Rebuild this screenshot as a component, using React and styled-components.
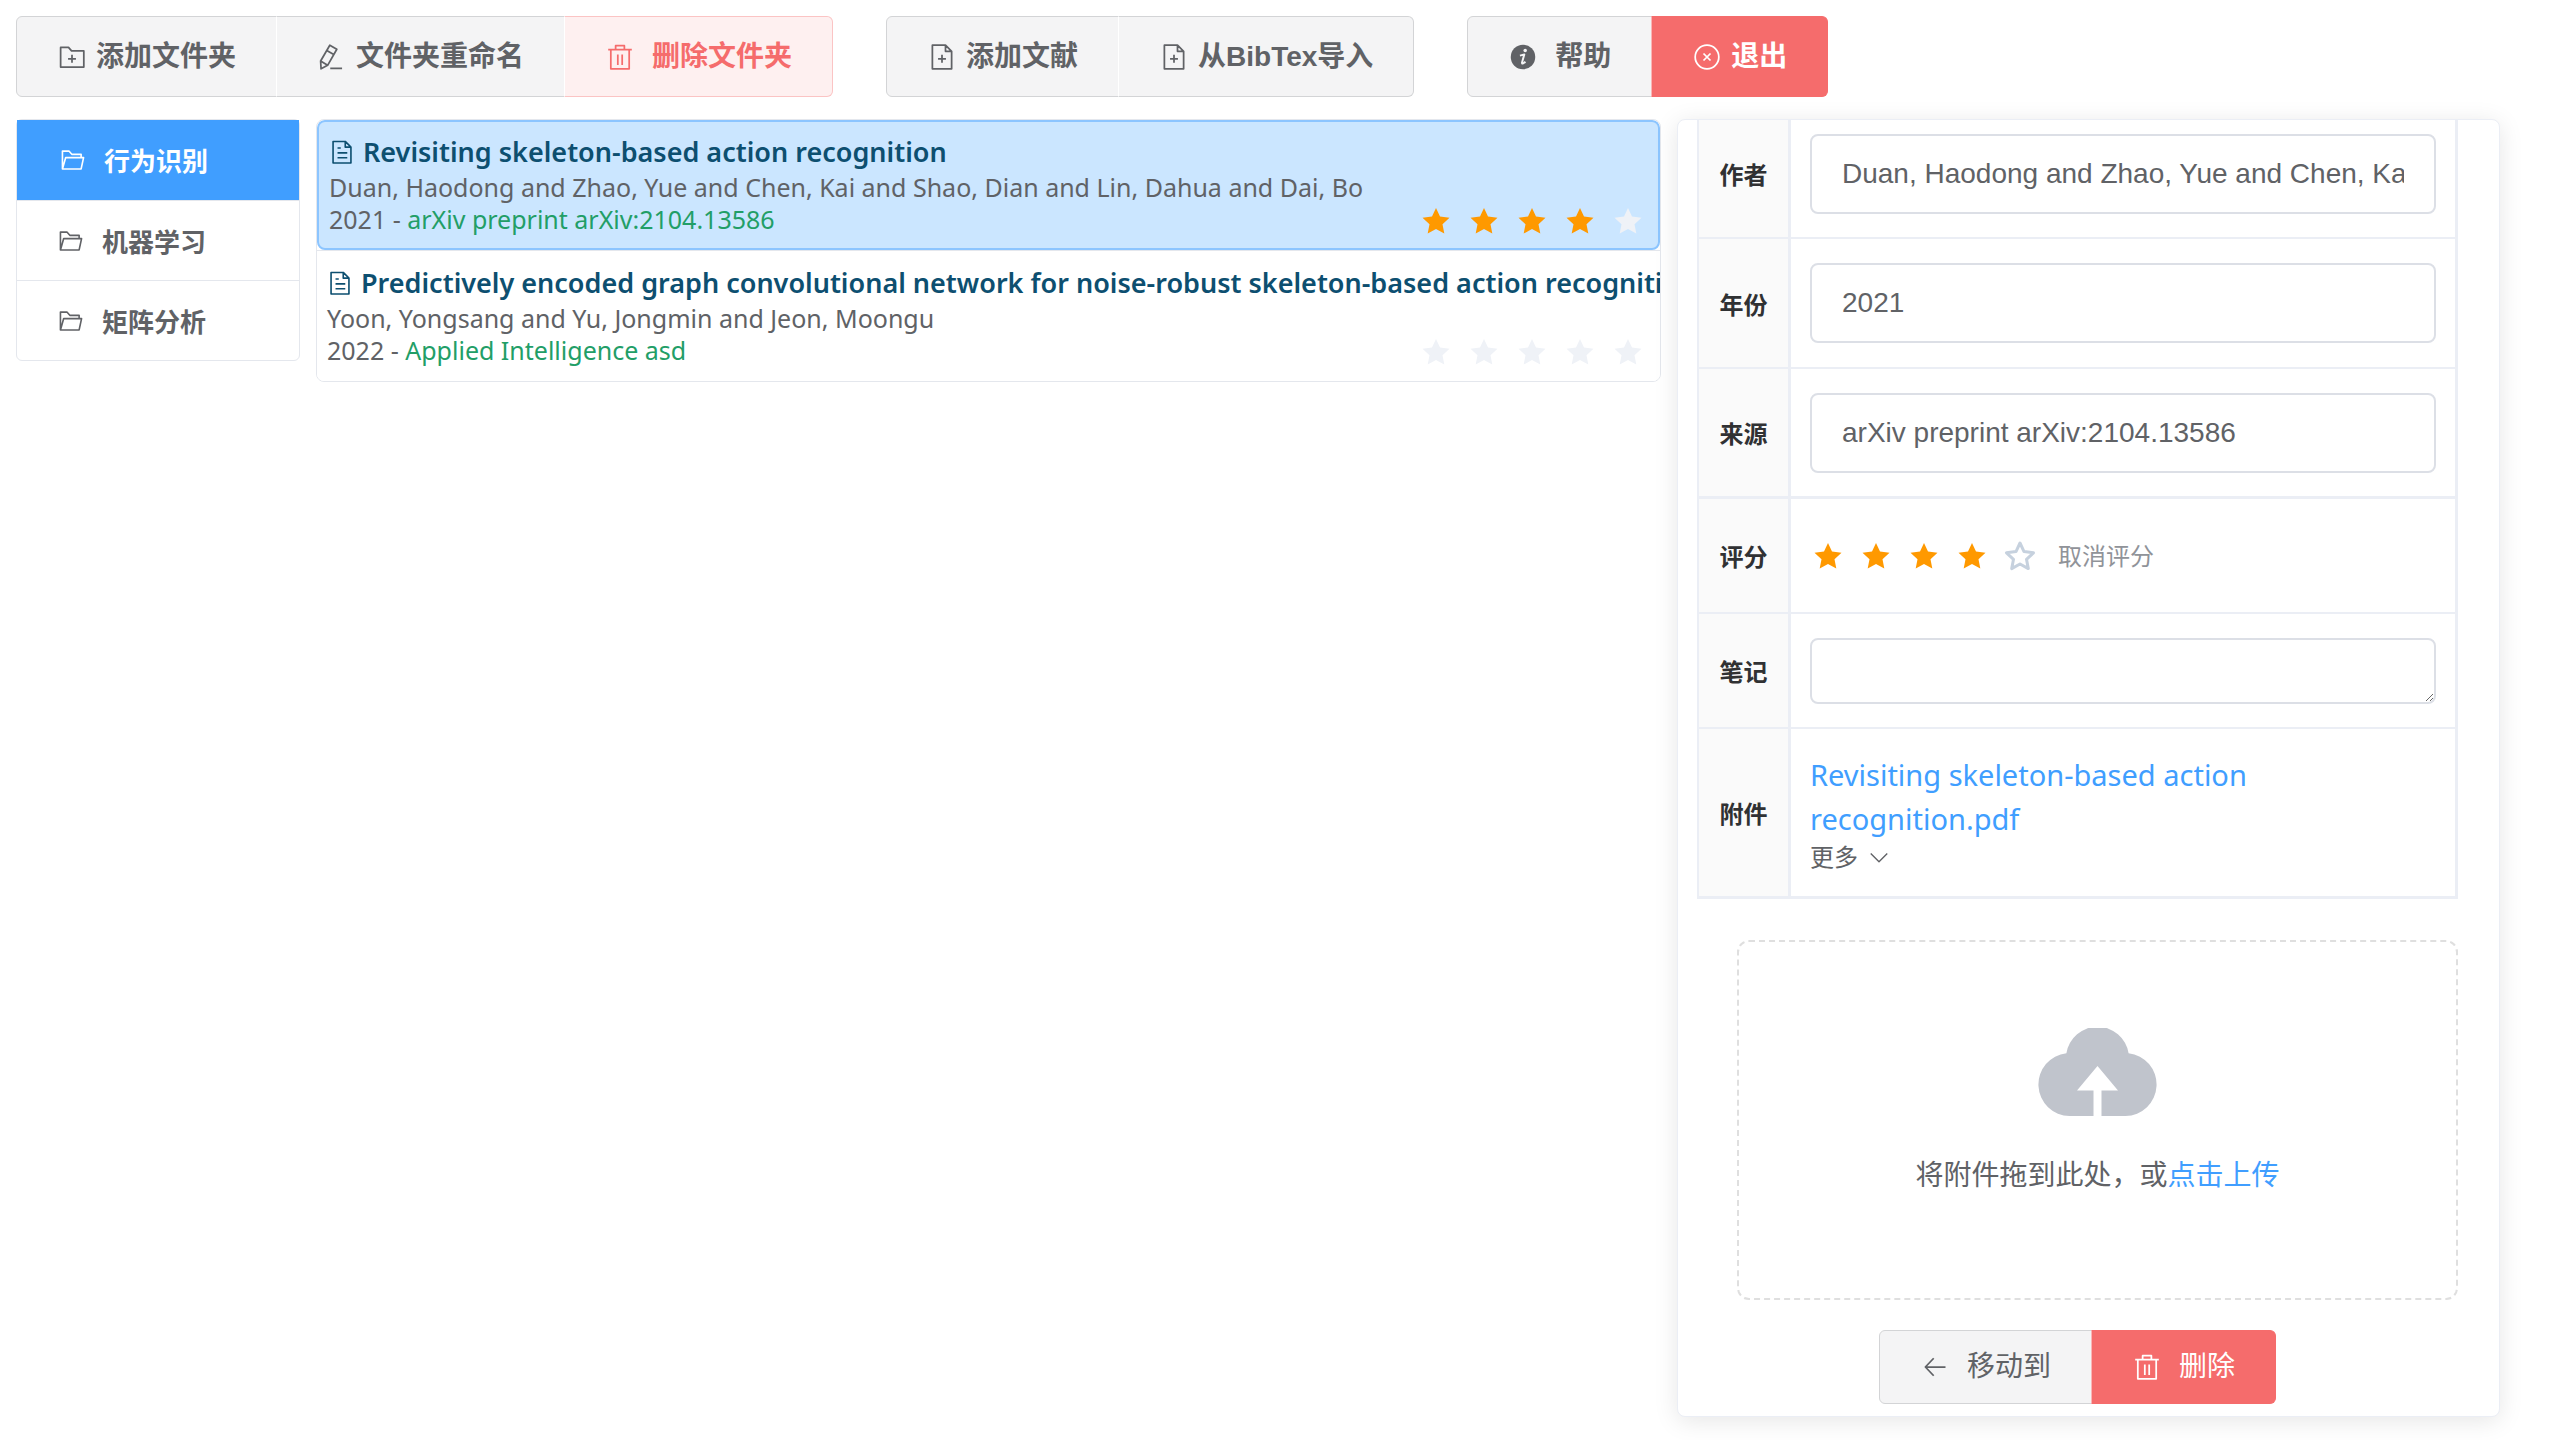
import React from "react";
import styled, { createGlobalStyle, css } from "styled-components";

const GlobalStyle = createGlobalStyle`
  *, *::before, *::after { box-sizing: border-box; }
  body { margin: 0; background: #fff; color: #606266; font-family: "Noto Sans", "Noto Sans CJK SC", sans-serif; font-size: 24px; }
  button, input, textarea { font-family: inherit; margin: 0; }
  svg { flex-shrink: 0; }
`;

const Page = styled.div`
  display: flex;
  flex-direction: column;
  gap: 22px;
  height: 100vh;
  padding: 16px 60px 23px 16px;
`;

const Toolbar = styled.header`
  display: flex;
  gap: 53px;
`;

const ButtonGroup = styled.div`
  display: flex;
  & > button:first-child { border-radius: 6px 0 0 6px; }
  & > button:last-child { border-radius: 0 6px 6px 0; }
  & > button + button { margin-left: -1px; }
`;

const tones = {
  info: css`
    background: #f4f4f5;
    border-color: #d3d4d6;
    color: #606266;
    &:not(:first-child) { border-left-color: #fff; }
  `,
  dangerPlain: css`
    background: #fef0f0;
    border-color: #fbc4c4;
    border-left-color: #fff;
    color: #f56c6c;
  `,
  danger: css`
    background: #f56c6c;
    border-color: #f56c6c;
    border-left-color: #fab6b6;
    color: #fff;
  `,
};

const Button = styled.button`
  display: flex;
  align-items: center;
  justify-content: center;
  gap: ${(p) => (p.$spaced ? 18 : 10)}px;
  height: ${(p) => (p.$compact ? 74 : 81)}px;
  padding: 0 40px 0 41px;
  border: 1px solid;
  font-family: "Liberation Sans", Arial, "Noto Sans CJK SC", sans-serif;
  font-size: 28px;
  line-height: 36px;
  font-weight: ${(p) => (p.$compact ? 400 : 700)};
  white-space: nowrap;
  cursor: pointer;
  ${(p) => tones[p.$tone || "info"]}
`;

const Main = styled.main`
  display: grid;
  grid-template-columns: 284px minmax(0, 1345fr) minmax(0, 823fr);
  column-gap: 16px;
  align-items: start;
  flex: 1;
  min-height: 0;
`;

const Folders = styled.nav`
  display: flex;
  flex-direction: column;
  border: 1px solid #e4e7ed;
  border-radius: 6px;
`;

const Folder = styled.button`
  display: flex;
  align-items: center;
  gap: 18px;
  height: 80px;
  padding: 0 41px;
  border: 0 solid #e4e7ed;
  border-top-width: 1px;
  background: transparent;
  color: #606266;
  font-size: 26px;
  font-weight: 700;
  cursor: pointer;
  &:first-child { border-top: 0; }
  ${(p) =>
    p.$active &&
    css`
      padding: 0 43px;
      background: #409eff;
      color: #fff;
    `}
`;

const Papers = styled.section`
  border: 1px solid #e4e7ed;
  border-radius: 8px;
  overflow: hidden;
`;

const Paper = styled.article`
  display: flex;
  flex-direction: column;
  height: 131px;
  padding: 13px 14px 0 10px;
  background: #fff;
  border-top: 1px solid #e4e7ed;
  ${(p) =>
    p.$active &&
    css`
      height: 130px;
      padding: 11px 12px 0 10px;
      border: 2px solid #8cc5ff;
      border-radius: 8px;
      background: #cbe6ff;
    `}
`;

const PaperTitle = styled.h2`
  display: flex;
  align-items: center;
  gap: 8px;
  margin: 0;
  color: #0d4f70;
  font-size: 27px;
  line-height: 38px;
  font-weight: 600;
  white-space: nowrap;
`;

const Line = styled.div`
  display: flex;
  justify-content: space-between;
  font-size: 25px;
  line-height: 32px;
  white-space: nowrap;
`;

const Source = styled.span`
  color: #229e67;
`;

const Stars = styled.span`
  display: flex;
  align-items: center;
  gap: 12px;
`;

const Card = styled.aside`
  height: 100%;
  padding: 0 41px 0 19px;
  border: 1px solid #ebeef5;
  border-radius: 8px;
  background: #fff;
  box-shadow: 0 4px 24px rgba(0, 0, 0, 0.1);
  overflow: hidden;
`;

const Details = styled.table`
  width: 100%;
  border-collapse: separate;
  border-spacing: 0;
  border-left: 2px solid #ebeef5;
`;

const Row = styled.tr`
  height: ${(p) => p.$height}px;
  & > * { border-bottom: ${(p) => (p.$thick ? 3 : 2)}px solid #ebeef5; }
`;

const Label = styled.th`
  width: 92px;
  padding: 0 0 ${(p) => (p.$first ? 10 : 0)}px;
  border-right: 3px solid #ebeef5;
  background: #fafafa;
  color: #303133;
  font-size: 24px;
  font-weight: 700;
`;

const Cell = styled.td`
  padding: 0 19px ${(p) => (p.$first ? 10 : 0)}px;
  border-right: 3px solid #ebeef5;
`;

const field = css`
  display: block;
  width: 100%;
  border: 2px solid #dcdfe6;
  border-radius: 8px;
  background: #fff;
  color: #606266;
  outline: none;
`;

const Input = styled.input`
  ${field}
  height: 80px;
  padding: 0 30px;
  font-family: "Liberation Sans", Arial, sans-serif;
  font-size: 28px;
`;

const Notes = styled.textarea`
  ${field}
  height: 66px;
  resize: vertical;
`;

const Rating = styled.div`
  display: flex;
  align-items: center;
  gap: 12px;
`;

const Clear = styled.button`
  margin-left: 8px;
  padding: 0;
  border: 0;
  background: none;
  color: #909399;
  font-size: 24px;
  line-height: 32px;
  cursor: pointer;
`;

const FileLink = styled.a`
  display: block;
  color: #409eff;
  font-size: 29px;
  line-height: 44px;
  text-decoration: none;
`;

const More = styled.button`
  display: flex;
  align-items: center;
  gap: 10px;
  padding: 0;
  border: 0;
  background: none;
  color: #606266;
  font-size: 24px;
  line-height: 32px;
  cursor: pointer;
`;

const DropZone = styled.div`
  display: flex;
  flex-direction: column;
  align-items: center;
  height: 360px;
  margin: 41px 0 0 40px;
  padding-top: 86px;
  border: 2px dashed #dfdfdf;
  border-radius: 12px;
  font-size: 28px;
  line-height: 40px;
`;

const DropText = styled.p`
  margin: 38px 0 0;
`;

const UploadLink = styled.a`
  color: #409eff;
  text-decoration: none;
`;

const Actions = styled.div`
  display: flex;
  justify-content: center;
  padding-top: 30px;
`;

const paths = {
  folderAdd: "M3 27.500V5h9l3.500 4H29.500v18.500zM16 13.500v9M11.500 18h9",
  edit: "M13.500 2.500l8 4.700L11 25.500L3.500 29.500 3 20.500zM10 8.500l8 4.700M3 20.500l8 5M14 29h13.500",
  trash: "M2.500 7.500h27M11 7.500V3h10v4.500M5.500 7.500v22h21v-22M13.500 13v12M18.500 13v12",
  docAdd: "M5 2.500h15l7 7v20H5zM20 2.500v7h7M16 13.500v9M11.500 18h9",
  doc: "M5 3h15l7 7v19.500H5zM20 3v7h7M10.500 11h4M10.500 17h12M10.500 23h12",
  close: "M16 2.500a13.500 13.500 0 1 0 0 27a13.500 13.500 0 1 0 0-27M12 12l8 8M20 12l-8 8",
  folder: "M3 27V5h8l3.500 4H26v4M3 27L7 13h22l-3 14z",
  back: "M28 16H5M14.500 6l-9.500 10 9.500 10",
  down: "M4 11l12 12 12-12",
};

const Icon = ({ name, size = 28 }) => (
  <svg width={size} height={size} viewBox="0 0 32 32" fill="none" stroke="currentColor" strokeWidth="2" strokeLinejoin="round" aria-hidden="true">
    <path d={paths[name]} />
  </svg>
);

const InfoIcon = () => (
  <svg width="28" height="28" viewBox="0 0 32 32" aria-hidden="true">
    <circle cx="16" cy="16" r="14" fill="currentColor" />
    <circle cx="18.500" cy="8.500" r="2" fill="#f4f4f5" />
    <path d="M12.500 14.500l5-1.500-2.700 9.500q0 2.500 4-1" fill="none" stroke="#f4f4f5" strokeWidth="2.200" strokeLinejoin="round" />
  </svg>
);

const Star = ({ state }) => (
  <svg width="36" height="36" viewBox="0 0 36 36" aria-hidden="true">
    <path
      d="M18 5l4 8.600 9.500 1.200-7 6.500 1.800 9.300-8.300-4.600-8.300 4.600 1.800-9.300-7-6.500 9.500-1.200z"
      fill={state === "on" ? "#ff9900" : state === "off" ? "#eff2f7" : "none"}
      stroke={state === "outline" ? "#c6d1de" : "none"}
      strokeWidth="3"
      strokeLinejoin="round"
    />
  </svg>
);

const StarRow = ({ value, empty }) =>
  [1, 2, 3, 4, 5].map((n) => <Star key={n} state={n <= value ? "on" : empty} />);

const Cloud = () => (
  <svg width="119" height="88" viewBox="0 0 119 88" aria-hidden="true">
    <path
      d="M31.500 88A31.500 31.500 0 0 1 28.400 25.200A31.500 31.500 0 0 1 90.600 25.200A31.500 31.500 0 0 1 87.500 88H63.500V62.500H80L59.500 38L39 62.500H55.500V88z"
      fill="#c0c4cc"
    />
  </svg>
);

const folders = ["行为识别", "机器学习", "矩阵分析"];

const papers = [
  {
    title: "Revisiting skeleton-based action recognition",
    authors: "Duan, Haodong and Zhao, Yue and Chen, Kai and Shao, Dian and Lin, Dahua and Dai, Bo",
    year: "2021",
    source: "arXiv preprint arXiv:2104.13586",
    stars: 4,
  },
  {
    title: "Predictively encoded graph convolutional network for noise-robust skeleton-based action recognition",
    authors: "Yoon, Yongsang and Yu, Jongmin and Jeon, Moongu",
    year: "2022",
    source: "Applied Intelligence asd",
    stars: 0,
  },
];

export default function App() {
  return (
    <>
      <GlobalStyle />
      <Page>
        <Toolbar>
          <ButtonGroup>
            <Button><Icon name="folderAdd" />添加文件夹</Button>
            <Button><Icon name="edit" />文件夹重命名</Button>
            <Button $tone="dangerPlain" $spaced><Icon name="trash" />删除文件夹</Button>
          </ButtonGroup>
          <ButtonGroup>
            <Button><Icon name="docAdd" />添加文献</Button>
            <Button><Icon name="docAdd" />从BibTex导入</Button>
          </ButtonGroup>
          <ButtonGroup>
            <Button $spaced><InfoIcon />帮助</Button>
            <Button $tone="danger"><Icon name="close" />退出</Button>
          </ButtonGroup>
        </Toolbar>
        <Main>
          <Folders>
            {folders.map((name, i) => (
              <Folder key={name} $active={i === 0}><Icon name="folder" size={26} />{name}</Folder>
            ))}
          </Folders>
          <Papers>
            {papers.map((p, i) => (
              <Paper key={p.title} $active={i === 0}>
                <PaperTitle><Icon name="doc" size={26} />{p.title}</PaperTitle>
                <Line>{p.authors}</Line>
                <Line>
                  <span>{p.year} - <Source>{p.source}</Source></span>
                  <Stars><StarRow value={p.stars} empty="off" /></Stars>
                </Line>
              </Paper>
            ))}
          </Papers>
          <Card>
            <Details>
              <tbody>
                <Row $height={119}>
                  <Label $first><label htmlFor="authors">作者</label></Label>
                  <Cell $first><Input id="authors" defaultValue={papers[0].authors} /></Cell>
                </Row>
                <Row $height={130}>
                  <Label><label htmlFor="year">年份</label></Label>
                  <Cell><Input id="year" defaultValue="2021" /></Cell>
                </Row>
                <Row $height={130} $thick>
                  <Label><label htmlFor="source">来源</label></Label>
                  <Cell><Input id="source" defaultValue={papers[0].source} /></Cell>
                </Row>
                <Row $height={115}>
                  <Label>评分</Label>
                  <Cell><Rating><StarRow value={4} empty="outline" /><Clear>取消评分</Clear></Rating></Cell>
                </Row>
                <Row $height={115}>
                  <Label><label htmlFor="notes">笔记</label></Label>
                  <Cell><Notes id="notes" /></Cell>
                </Row>
                <Row $height={170} $thick>
                  <Label>附件</Label>
                  <Cell>
                    <FileLink href="#file">Revisiting skeleton-based action recognition.pdf</FileLink>
                    <More>更多<Icon name="down" size={22} /></More>
                  </Cell>
                </Row>
              </tbody>
            </Details>
            <DropZone>
              <Cloud />
              <DropText>将附件拖到此处，或<UploadLink href="#upload">点击上传</UploadLink></DropText>
            </DropZone>
            <Actions>
              <ButtonGroup>
                <Button $compact $spaced><Icon name="back" />移动到</Button>
                <Button $compact $spaced $tone="danger"><Icon name="trash" />删除</Button>
              </ButtonGroup>
            </Actions>
          </Card>
        </Main>
      </Page>
    </>
  );
}
